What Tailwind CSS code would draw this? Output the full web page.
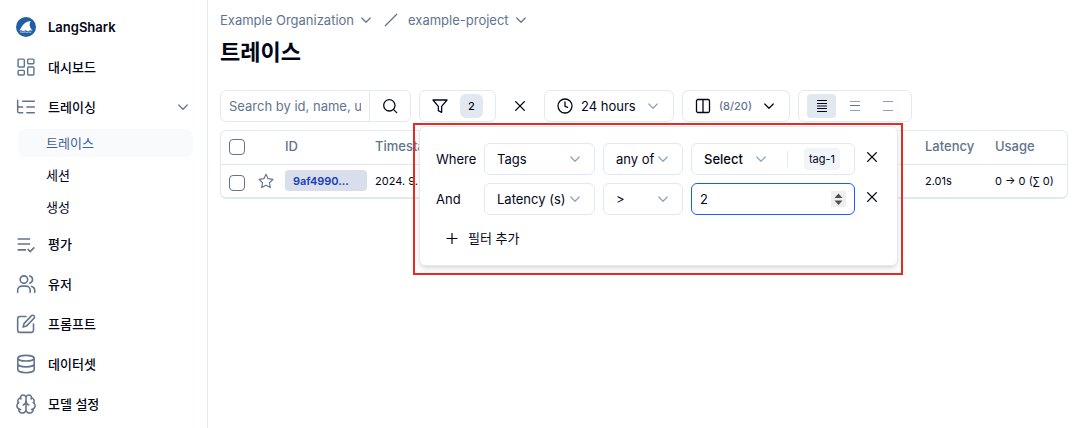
<!DOCTYPE html>
<html lang="ko">
<head>
<meta charset="utf-8">
<meta name="viewport" content="width=device-width, initial-scale=1">
<title>트레이스 - LangShark</title>
<script src="https://cdn.jsdelivr.net/npm/@tailwindcss/browser@4"></script>
</head>
<body class="flex min-h-screen bg-white font-['Inter','Noto_Sans_CJK_KR',sans-serif] text-[13px] leading-5 text-slate-950">
<svg class="hidden" aria-hidden="true">
  <symbol id="chev" viewBox="0 0 24 24"><path d="m3.500 8 8.500 8.500L20.500 8" fill="none" stroke="currentColor" stroke-width="2.400" stroke-linecap="round" stroke-linejoin="round"/></symbol>
  <symbol id="x" viewBox="0 0 24 24"><path d="M19.500 4.500l-15 15M4.500 4.500l15 15" fill="none" stroke="currentColor" stroke-width="2.400" stroke-linecap="round"/></symbol>
</svg>

<aside class="w-52 shrink-0 border-r border-slate-200 px-3.5 pt-[7px]">
  <a href="#" class="flex h-10 items-center gap-3 text-[13px] font-semibold">
    <svg class="ml-0.5 size-5" viewBox="0 0 20 20"><circle cx="10" cy="10" r="10" fill="#205fa6"/><path d="M3.300 13.400C5.500 11.500 6.500 5 14.800 4.100c-1.800 2.500-1.600 5.600.8 8.600l1.100 1.300c-1.400-.2-1.700-.9-2.600-.8-1 .1-1.200.9-2.200.9s-1.300-.9-2.300-.9-1.300.9-2.300.9-1.200-.8-2-.8c-.9 0-1.300.4-2 .1z" fill="#fff"/><path d="M4 15.200c1.200-.7 1.800.2 3 .1 1.200 0 1.600-.8 2.800-.1 1 .6 1.700-.1 2.700-.2 1-.1 1.700.5 2.700.3" fill="none" stroke="#fff" stroke-width=".7"/></svg>
    LangShark
  </a>
  <nav class="font-medium">
    <a href="#" class="flex h-10 items-center gap-3 pl-0.5">
      <svg class="size-5 text-slate-500" viewBox="0 0 24 24" fill="none" stroke="currentColor" stroke-width="1.700" stroke-linejoin="round"><rect x="2.500" y="2.500" width="7.500" height="9.500" rx="1"/><rect x="14" y="2.500" width="7.500" height="5.500" rx="1"/><rect x="14" y="12" width="7.500" height="9.500" rx="1"/><rect x="2.500" y="16" width="7.500" height="5.500" rx="1"/></svg>
      대시보드
    </a>
    <button type="button" aria-expanded="true" class="flex h-10 w-full items-center gap-3 pr-1 pl-0.5">
      <svg class="size-5 text-slate-500" viewBox="0 0 24 24" fill="none" stroke="currentColor" stroke-width="1.800" stroke-linecap="round" stroke-linejoin="round"><path d="M22 5H8M22 12h-9M22 19h-9M2 4v13c0 1.400.6 2 2 2h4M2 9.500c0 1.700.7 2.500 2 2.500h4"/></svg>
      트레이싱
      <svg class="ml-auto size-3 text-slate-500"><use href="#chev"/></svg>
    </button>
    <div class="ml-1 flex flex-col gap-1 pt-0.5 font-normal">
      <a href="#" aria-current="page" class="flex h-7 items-center rounded-lg bg-slate-50 pl-7 text-[#3d629e]">트레이스</a>
      <a href="#" class="flex h-7 items-center pl-7">세션</a>
      <a href="#" class="flex h-7 items-center pl-7">생성</a>
    </div>
    <a href="#" class="mt-[3px] flex h-10 items-center gap-3 pl-0.5">
      <svg class="size-5 text-slate-500" viewBox="0 0 24 24" fill="none" stroke="currentColor" stroke-width="2"><path d="M2 6h15M2 12h15M2 19h10"/><path d="m14 18 3 3 5-5"/></svg>
      평가
    </a>
    <a href="#" class="flex h-10 items-center gap-3 pl-0.5">
      <svg class="size-5 text-slate-500" viewBox="0 0 24 24" fill="none" stroke="currentColor" stroke-width="1.900" stroke-linecap="round"><path d="M2 22v-2.500a5 5 0 0 1 5-5h5a5 5 0 0 1 5 5V22M22.500 22v-2.500a5 5 0 0 0-3.700-4.600M16.500 2.300a4.500 4.500 0 0 1 0 8.700"/><circle cx="9.500" cy="6.700" r="4.500"/></svg>
      유저
    </a>
    <a href="#" class="flex h-10 items-center gap-3 pl-0.5">
      <svg class="size-5 text-slate-500" viewBox="0 0 24 24" fill="none" stroke="currentColor" stroke-width="1.900" stroke-linecap="round" stroke-linejoin="round"><path d="M12 3H4.500A2.500 2.500 0 0 0 2 5.500v14A2.500 2.500 0 0 0 4.500 22h14a2.500 2.500 0 0 0 2.500-2.500V12"/><path d="M18.400 2.200a2 2 0 0 1 3.200 3L12.500 14.500l-4 1.200 1.100-4.200z"/></svg>
      프롬프트
    </a>
    <a href="#" class="flex h-10 items-center gap-3 pl-0.5">
      <svg class="size-5 text-slate-500" viewBox="0 0 24 24" fill="none" stroke="currentColor" stroke-width="1.900"><ellipse cx="12" cy="5" rx="9.800" ry="3.400"/><path d="M2.200 5v14c0 1.900 4.400 3.400 9.800 3.400s9.800-1.500 9.800-3.400V5M2.200 12c0 1.900 4.400 3.400 9.800 3.400s9.800-1.500 9.800-3.400"/></svg>
      데이터셋
    </a>
    <a href="#" class="flex h-10 items-center gap-3 pl-0.5">
      <svg class="size-5 text-slate-500" viewBox="1 1 22 22" fill="none" stroke="currentColor" stroke-width="1.700" stroke-linecap="round" stroke-linejoin="round"><path d="M12 5a3 3 0 1 0-5.997.125 4 4 0 0 0-2.526 5.770 4 4 0 0 0 .556 6.588A4 4 0 1 0 12 18ZM12 5a3 3 0 1 1 5.997.125 4 4 0 0 1 2.526 5.770 4 4 0 0 1-.556 6.588A4 4 0 1 1 12 18Z"/><path d="M15 13a4.500 4.500 0 0 1-3-4 4.500 4.500 0 0 1-3 4M17.599 6.500a3 3 0 0 0 .399-1.375M6.003 5.125A3 3 0 0 0 6.401 6.500M3.477 10.896a4 4 0 0 1 .585-.396M19.938 10.500a4 4 0 0 1 .585.396M6 18a4 4 0 0 1-1.967-.516M19.967 17.484A4 4 0 0 1 18 18"/></svg>
      모델 설정
    </a>
  </nav>
</aside>

<main class="min-w-0 flex-1 px-3 pt-2.5">
  <nav aria-label="Breadcrumb" class="flex items-center text-slate-500">
    <button type="button" class="flex items-center gap-1.5">Example Organization <svg class="size-3"><use href="#chev"/></svg></button>
    <svg class="mr-2 ml-3 h-3.5 w-4" viewBox="0 0 16 14"><path d="M1 13 13 1" stroke="currentColor" stroke-width="1.200"/></svg>
    <button type="button" class="flex items-center gap-1.5">example-project <svg class="size-3"><use href="#chev"/></svg></button>
  </nav>
  <h1 class="mt-1.5 text-[22px] leading-8 font-bold">트레이스</h1>

  <div class="mt-5.5 flex gap-2">
    <form class="flex h-8 w-[191px] rounded-md border border-slate-200">
      <input type="text" aria-label="Search" placeholder="Search by id, name, user id" class="w-[149px] min-w-0 border-r border-slate-200 px-2 placeholder:text-slate-500">
      <button type="button" aria-label="Run search" class="flex flex-1 items-center justify-center"><svg class="size-4" viewBox="0 0 24 24" fill="none" stroke="currentColor" stroke-width="1.900" stroke-linecap="round"><circle cx="11" cy="11" r="8.500"/><path d="m17.500 17.500 4.500 4.500"/></svg></button>
    </form>

    <div class="relative">
      <button type="button" aria-label="Filters" class="flex h-8 w-[77px] items-center gap-3 rounded-md border border-slate-200 pl-3">
        <svg class="size-4" viewBox="0 0 24 24" fill="none" stroke="currentColor" stroke-width="1.900" stroke-linejoin="round"><path d="M1.500 3h21l-8 9.500v9l-5-2.500v-6.500z"/></svg>
        <span class="flex h-6 w-[23px] items-center justify-center rounded-md bg-slate-200 text-[11px] font-medium">2</span>
      </button>

      <div role="dialog" aria-label="Filters" class="absolute top-full left-0 z-10 mt-1 w-[479px] rounded-md border border-slate-200 bg-white px-4 pt-4 pb-[11px] shadow-md">
        <div class="grid grid-cols-[40px_111px_80px_164px_18px] items-center gap-2">
          <span>Where</span>
          <div class="grid items-center">
            <select aria-label="Column" class="h-8 w-full appearance-none rounded-md border border-slate-200 pl-3 [grid-area:1/1]"><option>Tags</option></select>
            <svg class="pointer-events-none mr-3.5 size-3 justify-self-end text-slate-400 [grid-area:1/1]"><use href="#chev"/></svg>
          </div>
          <div class="grid items-center">
            <select aria-label="Operator" class="h-8 w-full appearance-none rounded-md border border-slate-200 pl-3 [grid-area:1/1]"><option>any of</option></select>
            <svg class="pointer-events-none mr-3.5 size-3 justify-self-end text-slate-400 [grid-area:1/1]"><use href="#chev"/></svg>
          </div>
          <button type="button" class="flex h-8 items-center rounded-md border border-slate-200 pl-3 font-medium">
            Select
            <svg class="ml-3 size-3 text-slate-400"><use href="#chev"/></svg>
            <span class="ml-5 h-4 w-px bg-slate-200"></span>
            <span class="ml-4 flex h-[22px] items-center rounded bg-slate-100 px-[5px] text-[11px] font-normal">tag-1</span>
          </button>
          <button type="button" aria-label="Remove filter" class="flex justify-center pb-1"><svg class="size-3.5"><use href="#x"/></svg></button>

          <span>And</span>
          <div class="grid items-center">
            <select aria-label="Column" class="h-8 w-full appearance-none rounded-md border border-slate-200 pl-3 [grid-area:1/1]"><option>Latency (s)</option></select>
            <svg class="pointer-events-none mr-3.5 size-3 justify-self-end text-slate-400 [grid-area:1/1]"><use href="#chev"/></svg>
          </div>
          <div class="grid items-center">
            <select aria-label="Operator" class="h-8 w-full appearance-none rounded-md border border-slate-200 pl-3 [grid-area:1/1]"><option>&gt;</option></select>
            <svg class="pointer-events-none mr-3.5 size-3 justify-self-end text-slate-400 [grid-area:1/1]"><use href="#chev"/></svg>
          </div>
          <div class="grid items-center">
            <input type="number" aria-label="Value" value="2" class="h-8 w-full rounded-md border border-blue-600 px-2 outline-none [grid-area:1/1] [&::-webkit-inner-spin-button]:appearance-none">
            <svg class="pointer-events-none mr-[9px] h-4 w-[15px] justify-self-end [grid-area:1/1]" viewBox="0 0 15 16"><path fill="#efefef" d="M0 0h15v16H0z"/><path fill="#505050" d="m7.500 2.500 4 4.500h-8zM7.500 14l4-4.500h-8z"/></svg>
          </div>
          <button type="button" aria-label="Remove filter" class="flex justify-center pb-1"><svg class="size-3.5"><use href="#x"/></svg></button>
        </div>
        <button type="button" class="mt-[7px] flex h-8 items-center gap-2 pl-2">
          <svg class="size-4" viewBox="0 0 16 16"><path d="M8 3v11M2.500 8.500h11" stroke="currentColor" stroke-width="1.200"/></svg>
          필터 추가
        </button>
        <div class="pointer-events-none absolute -top-1 -right-1.5 -bottom-2.5 -left-[7px] border-2 border-[#ea2a20]"></div>
      </div>
    </div>

    <button type="button" aria-label="Clear filters" class="flex size-8 items-center justify-center"><svg class="size-3.5"><use href="#x"/></svg></button>

    <button type="button" class="flex h-8 w-[130px] items-center rounded-md border border-slate-200 pl-3">
      <svg class="mr-2 size-4" viewBox="0 0 24 24" fill="none" stroke="currentColor" stroke-width="1.900" stroke-linecap="round"><circle cx="12" cy="12" r="10.500"/><path d="M12 6v6.500l4 1.500"/></svg>
      24 hours
      <svg class="mr-3.5 ml-auto size-3 text-slate-400"><use href="#chev"/></svg>
    </button>

    <button type="button" aria-label="Columns" class="flex h-8 w-[108px] items-center rounded-md border border-slate-200 pl-3">
      <svg class="size-4" viewBox="0 0 16 16" fill="none" stroke="currentColor" stroke-width="1.300"><rect x="1.500" y="1.500" width="13" height="13" rx="1.500"/><path d="M8 1.500v13"/></svg>
      <span class="ml-2 text-[11px] font-medium text-slate-500">(8/20)</span>
      <svg class="mr-3.5 ml-auto size-3"><use href="#chev"/></svg>
    </button>

    <div role="group" aria-label="Row height" class="flex h-8 w-[114px] items-center gap-1 rounded-md border border-slate-200 pl-2">
      <button type="button" aria-label="Small" aria-pressed="true" class="flex h-6 w-[29px] items-center justify-center rounded bg-slate-200"><svg class="h-3 w-2.5" viewBox="0 0 10 12" stroke="currentColor"><path d="M0 .5h10M0 3.500h10M0 6h10M0 8.500h10M0 11.500h10"/></svg></button>
      <button type="button" aria-label="Medium" class="flex h-6 w-[29px] items-center justify-center text-slate-400"><svg class="h-3 w-2.5" viewBox="0 0 10 12" stroke="currentColor"><path d="M0 1.500h10M0 10.500h10"/><path class="text-slate-500" d="M0 5.500h10"/></svg></button>
      <button type="button" aria-label="Large" class="flex h-6 w-[29px] items-center justify-center text-slate-400"><svg class="h-3 w-2.5" viewBox="0 0 10 12" stroke="currentColor"><path d="M0 1.500h10M0 10.500h10"/></svg></button>
    </div>
  </div>

  <div class="mt-2 overflow-hidden rounded-md border border-b-2 border-slate-200">
    <table class="w-full table-fixed text-left">
      <colgroup><col class="w-8"><col class="w-6"><col class="w-[90px]"><col><col class="w-[70px]"><col class="w-20"></colgroup>
      <thead class="text-slate-500">
        <tr class="h-[33px] border-b border-slate-200">
          <th class="pl-2"><input type="checkbox" aria-label="Select all" class="block size-4 appearance-none rounded border border-slate-500"></th>
          <td></td>
          <th class="pb-0.5 pl-2 font-medium">ID</th>
          <th class="pb-0.5 pl-2 font-medium">Timestamp</th>
          <th class="pb-0.5 pl-2 font-medium">Latency</th>
          <th class="pb-0.5 pl-2 font-medium">Usage</th>
        </tr>
      </thead>
      <tbody class="text-[11px]">
        <tr class="h-[33px]">
          <td class="pt-1 pl-2"><input type="checkbox" aria-label="Select trace" class="block size-4 appearance-none rounded border border-slate-500"></td>
          <td class="pl-[5px]"><button type="button" aria-label="Bookmark" class="block text-slate-500"><svg class="size-4" viewBox="0 0 24 24" fill="none" stroke="currentColor" stroke-width="1.700" stroke-linejoin="round"><path d="m12 1.800 3.200 6.700 7.300 1-5.300 5.100 1.300 7.300L12 18.400l-6.500 3.500 1.300-7.300L1.500 9.500l7.300-1z"/></svg></button></td>
          <td class="pl-2"><a href="#" class="flex h-[21px] items-center rounded bg-[#d9dfea] pl-2 font-semibold text-blue-800">9af4990...</a></td>
          <td class="truncate pl-2">2024. 9. 26. 오후 2:10:31</td>
          <td class="pl-2">2.01s</td>
          <td class="pl-2 whitespace-nowrap">0 → 0 (∑ 0)</td>
        </tr>
      </tbody>
    </table>
  </div>
</main>
</body>
</html>
